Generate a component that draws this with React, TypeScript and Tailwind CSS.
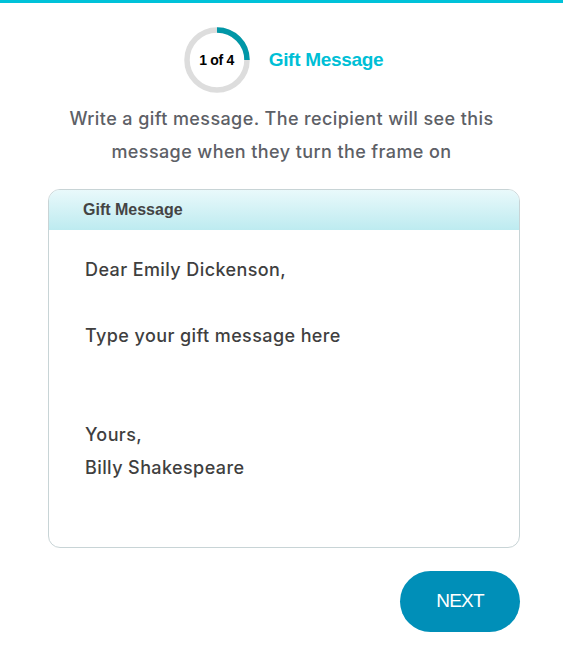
export default function App() {
  const r = 30;
  const c = 2 * Math.PI * r;
  return (
    <div className="min-h-screen bg-white" style={{ fontFamily: 'Inter, "Noto Sans", sans-serif' }}>
      <div className="h-[3px] bg-[#00c2d9]" />
      <div className="flex flex-col items-center pt-[22px]">
        {/* step indicator */}
        <div className="flex items-center gap-[17px] ml-[2px]">
          <div className="relative w-[70px] h-[70px]">
            <svg width="70" height="70" viewBox="0 0 70 70">
              <circle cx="35" cy="35" r={r} fill="none" stroke="#dddddd" strokeWidth="5.5" />
              <circle
                cx="35"
                cy="35"
                r={r}
                fill="none"
                stroke="#0097a7"
                strokeWidth="5.5"
                strokeDasharray={`${c / 4} ${c}`}
                transform="rotate(-90 35 35)"
              />
            </svg>
            <span className="absolute inset-0 flex items-center justify-center text-[14px] font-bold text-black tracking-[-0.3px]" style={{ fontFamily: '"Liberation Sans", Arial, sans-serif' }}>
              1 of 4
            </span>
          </div>
          <span className="text-[19px] font-bold text-[#00bfd6] tracking-[-0.3px]" style={{ fontFamily: '"Liberation Sans", Arial, sans-serif' }}>
            Gift Message
          </span>
        </div>

        <p className="mt-[7px] text-center text-[18px] leading-[33px] font-medium text-[#5d6066] tracking-[0.4px] w-[460px]">
          Write a gift message. The recipient will see this message when they turn the frame on
        </p>
      </div>

      <div className="ml-[48px] mr-[43px] mt-[21px] rounded-[12px] border border-[#c8d4d6] overflow-hidden">
        <div className="h-[40px] bg-gradient-to-b from-[#e9f9fb] to-[#bdebf0] flex items-center pl-[34px]">
          <span className="text-[16px] font-bold text-[#444]" style={{ fontFamily: '"Liberation Sans", Arial, sans-serif' }}>
            Gift Message
          </span>
        </div>
        <div className="px-[36px] pt-[23px] pb-[63px] text-[18px] leading-[33px] font-medium text-[#3f3f3f] tracking-[0.4px]">
          <div>Dear Emily Dickenson,</div>
          <div>&nbsp;</div>
          <div>Type your gift message here</div>
          <div>&nbsp;</div>
          <div>&nbsp;</div>
          <div>Yours,</div>
          <div>Billy Shakespeare</div>
        </div>
      </div>

      <div className="flex justify-end mx-[43px] mt-[23px]">
        <button className="w-[120px] h-[61px] rounded-full bg-[#008fb8] text-white text-[19px] tracking-[-0.8px]" style={{ fontFamily: '"Liberation Sans", Arial, sans-serif' }}>
          NEXT
        </button>
      </div>
    </div>
  );
}
